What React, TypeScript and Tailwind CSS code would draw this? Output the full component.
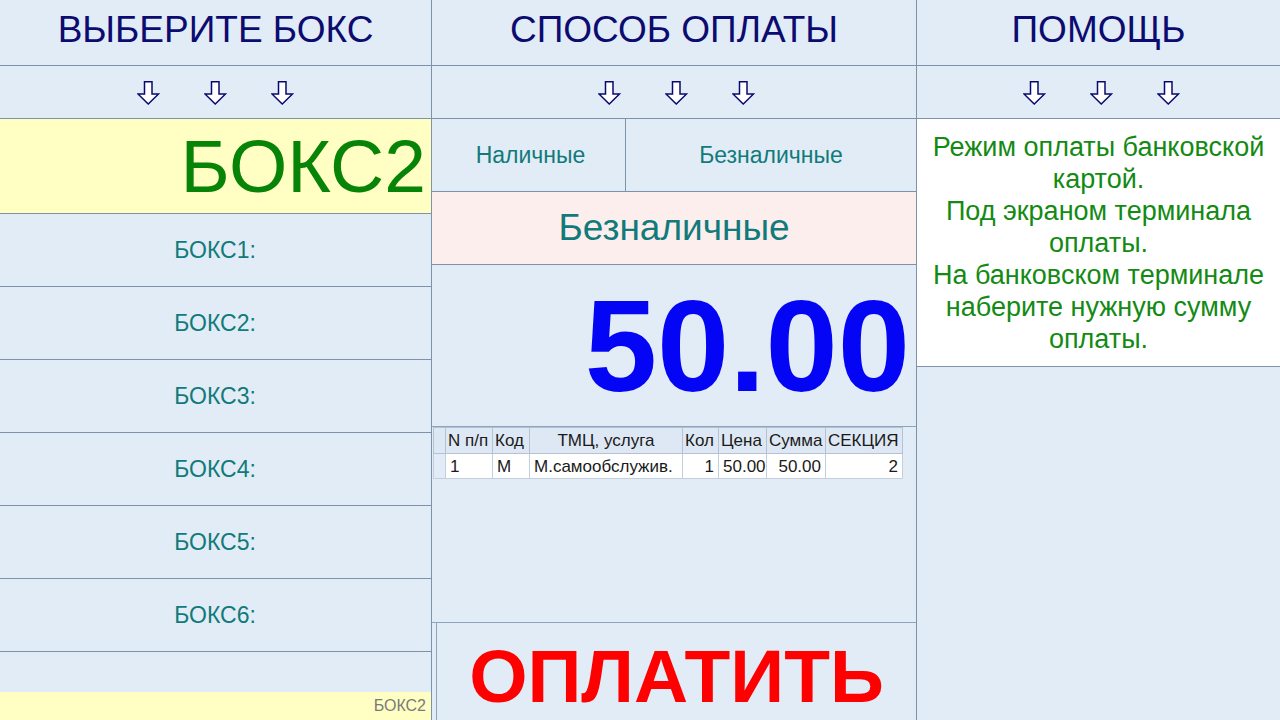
import React from "react";

const boxes = ["БОКС1:", "БОКС2:", "БОКС3:", "БОКС4:", "БОКС5:", "БОКС6:"];

function DownArrow() {
  return (
    <svg width="23" height="24" viewBox="0 0 23 24">
      <path
        d="M7.5 0.75 H15 V13 H21.5 L11.25 23 L1 13 H7.5 Z"
        fill="#ffffff"
        stroke="#0a0a6e"
        strokeWidth="1.5"
        strokeLinejoin="miter"
      />
    </svg>
  );
}

function Arrows({ shift = "" }: { shift?: string }) {
  return (
    <div className={`h-[53px] border-b border-[#7f93a8] flex items-center justify-center gap-[44px] pt-[2px] ${shift}`}>
      <DownArrow />
      <DownArrow />
      <DownArrow />
    </div>
  );
}

function Header({ title }: { title: string }) {
  return (
    <div className="h-[66px] border-b border-[#7f93a8] flex items-center justify-center text-[37px] text-[#0b0b70] pb-[6px]">
      {title}
    </div>
  );
}

const cols = [
  { w: "w-[12px]", head: "", cell: "", align: "" },
  { w: "w-[47px]", head: "N п/п", cell: "1", align: "text-left" },
  { w: "w-[37px]", head: "Код", cell: "M", align: "text-left" },
  { w: "w-[153px]", head: "ТМЦ, услуга", cell: "М.самообслужив.", align: "text-left" },
  { w: "w-[36px]", head: "Кол", cell: "1", align: "text-right" },
  { w: "w-[48px]", head: "Цена", cell: "50.00", align: "text-right" },
  { w: "w-[59px]", head: "Сумма", cell: "50.00", align: "text-right" },
  { w: "w-[77px]", head: "СЕКЦИЯ", cell: "2", align: "text-right" },
];

export default function App() {
  return (
    <div className="w-[1280px] h-[720px] overflow-hidden flex bg-[#e2ecf7] font-['Liberation_Sans',Arial,sans-serif]">
      {/* left column */}
      <div className="w-[432px] flex flex-col border-r border-[#7f93a8]">
        <Header title="ВЫБЕРИТЕ БОКС" />
        <Arrows />
        <div className="h-[95px] bg-[#ffffc4] border-b border-[#7f93a8] flex items-center justify-end pr-[5px] text-[75px] leading-none text-[#078407]">
          БОКС2
        </div>
        {boxes.map((b) => (
          <div
            key={b}
            className="h-[73px] border-b border-[#7f93a8] flex items-center justify-center text-[23px] text-[#117a7a] pr-[1px]"
          >
            {b}
          </div>
        ))}
        <div className="flex-1" />
        <div className="h-[28px] bg-[#ffffc4] flex items-end justify-end pr-[5px] pb-[2px] text-[16px] text-[#7a7a7a]">
          БОКС2
        </div>
      </div>

      {/* middle column */}
      <div className="w-[485px] flex flex-col border-r border-[#7f93a8]">
        <Header title="СПОСОБ ОПЛАТЫ" />
        <Arrows shift="pl-[4px]" />
        <div className="h-[73px] border-b border-[#7f93a8] flex text-[23px] text-[#117a7a]">
          <div className="w-[194px] border-r border-[#7f93a8] flex items-center justify-center pl-[4px]">
            Наличные
          </div>
          <div className="flex-1 flex items-center justify-center">Безналичные</div>
        </div>
        <div className="h-[73px] border-b border-[#7f93a8] bg-[#fdeeee] flex items-center justify-center text-[37px] text-[#117a7a]">
          Безналичные
        </div>
        <div className="h-[162px] border-b border-[#8fa3bb] flex items-center justify-end pr-[6px] text-[130px] font-bold leading-none text-[#0505f5]">
          50.00
        </div>
        <div className="flex-1 border-b border-[#8fa3bb] pl-[1px]">
          <table className="w-[469px] border-collapse text-[17px] leading-none text-[#1a1a1a] table-fixed">
            <colgroup>
              {cols.map((c, i) => (
                <col key={i} className={c.w} />
              ))}
            </colgroup>
            <thead>
              <tr className="h-[26px] bg-[#dde8f4]">
                {cols.map((c, i) => (
                  <th
                    key={i}
                    className={`border border-[#b3c3d5] font-normal px-[2px] whitespace-nowrap overflow-hidden ${
                      i === 3 ? "text-center" : "text-left"
                    }`}
                  >
                    {c.head}
                  </th>
                ))}
              </tr>
            </thead>
            <tbody>
              <tr className="h-[25px]">
                {cols.map((c, i) => (
                  <td
                    key={i}
                    className={`border border-[#c3cfdc] px-[4px] whitespace-nowrap overflow-hidden ${c.align} ${
                      i === 0 ? "bg-[#e2ecf7]" : "bg-white"
                    }`}
                  >
                    {c.cell}
                  </td>
                ))}
              </tr>
            </tbody>
          </table>
        </div>
        <div className="h-[97px] ml-[4px] border-l border-[#8fa3bb] flex items-center justify-center pt-[10px] text-[75px] font-bold leading-none text-[#ff0000]">
          ОПЛАТИТЬ
        </div>
      </div>

      {/* right column */}
      <div className="flex-1 flex flex-col">
        <Header title="ПОМОЩЬ" />
        <Arrows shift="pl-[6px]" />
        <div className="h-[248px] bg-white border-b border-[#7f93a8] px-[4px] pt-[12px] text-center text-[27px] leading-[32px] text-[#138a13]">
          <p>Режим оплаты банковской картой.</p>
          <p>Под экраном терминала оплаты.</p>
          <p>На банковском терминале наберите нужную сумму оплаты.</p>
        </div>
        <div className="flex-1" />
      </div>
    </div>
  );
}
